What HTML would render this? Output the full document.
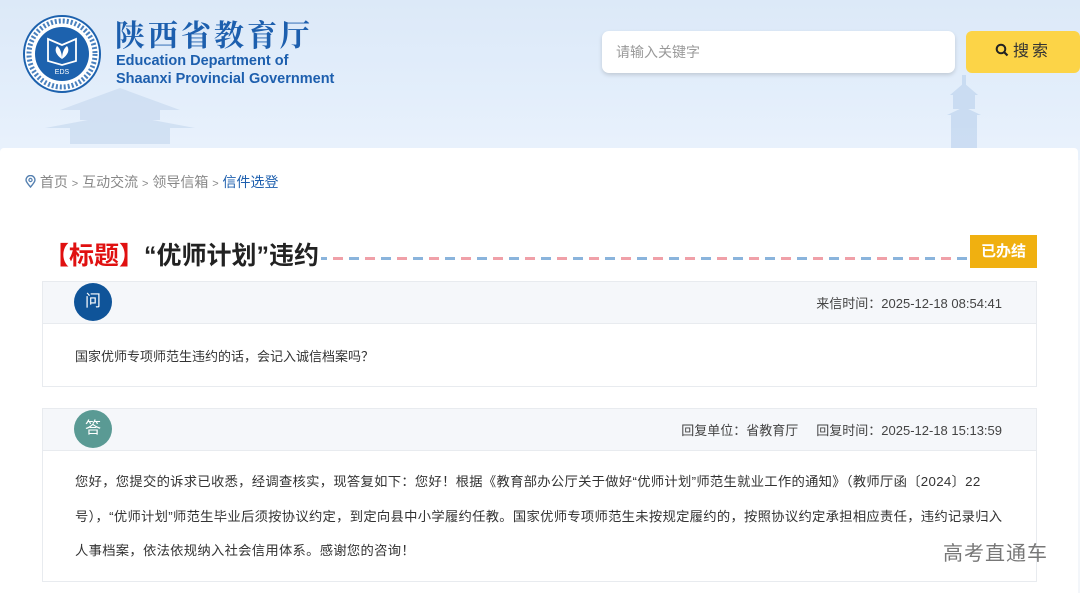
<!DOCTYPE html>
<html><head><meta charset="utf-8"><style>
*{margin:0;padding:0;box-sizing:border-box}
body{width:1080px;height:593px;overflow:hidden;background:#f3f6fa;font-family:"Liberation Sans","Noto Sans CJK SC",sans-serif;position:relative}
.hdr{position:absolute;left:0;top:0;width:1080px;height:160px;background:linear-gradient(180deg,#dce9f8 0%,#e3eefb 60%,#eaf2fc 100%)}
.main{position:absolute;left:0;top:148px;width:1078px;height:445px;background:#fff;border-radius:4px 4px 0 0}
.abs{position:absolute}
.card{position:absolute;left:42px;width:995px;border:1px solid #e8ebef;background:#fff}
.ch{height:42px;background:#f5f7fa;border-bottom:1px solid #e8ebef;position:relative}
.circ{position:absolute;left:31px;top:1px;width:38px;height:38px;border-radius:50%;color:#fff;font-size:16px;text-align:center;line-height:38px}
.meta{position:absolute;right:34px;top:11px;font-size:13px;color:#444}
.txt{font-size:13px;color:#333}
</style></head><body>
<div class="hdr">
  <svg class="abs" style="left:0;top:70px" width="620" height="80"><g fill="#c9dbf0" opacity="0.7"><path d="M60 40 L120 18 L180 40 Z"/><rect x="80" y="40" width="80" height="10"/><path d="M45 58 L120 44 L195 58Z"/><rect x="70" y="58" width="100" height="16"/></g></svg>
  <svg class="abs" style="left:935px;top:75px" width="60" height="75"><g fill="#c4d8f0" opacity="0.8"><rect x="27" y="0" width="4" height="10"/><path d="M15 20 L29 8 L43 20Z"/><rect x="18" y="20" width="22" height="14"/><path d="M12 40 L29 32 L46 40Z"/><rect x="16" y="40" width="26" height="35"/></g></svg>
  <svg class="abs" style="left:23px;top:15px" width="78" height="78" viewBox="0 0 78 78">
    <circle cx="39" cy="39" r="38" fill="#fff" stroke="#1d62ae" stroke-width="2"/>
    <circle cx="39" cy="39" r="27" fill="#1d62ae"/>
    <circle cx="39" cy="39" r="33" fill="none" stroke="#1d62ae" stroke-width="5" stroke-dasharray="2 2" opacity="0.8"/>
    <path d="M25 24 L39 30 L53 24 L53 46 L39 50 L25 46Z" fill="none" stroke="#fff" stroke-width="1.8"/>
    <path d="M39 44 C33 40 31 35 34 31 C37 33 39 38 39 44 C39 38 41 33 44 31 C47 35 45 40 39 44Z" fill="#fff"/>
    <text x="39" y="59" font-size="7" fill="#fff" text-anchor="middle" font-family="Liberation Sans">EDS</text>
  </svg>
  <div class="abs" style="left:115px;top:14px;font-size:30px;color:#1d5fae;letter-spacing:3px;font-family:'Noto Serif CJK SC',serif;font-weight:700;line-height:38px">陕西省教育厅</div>
  <div class="abs" style="left:116px;top:52px;font-size:14.5px;color:#1d5fae;font-weight:700;line-height:18px">Education Department of<br>Shaanxi Provincial Government</div>
  <div class="abs" style="left:602px;top:31px;width:353px;height:42px;background:#fff;border-radius:7px;box-shadow:0 2px 4px rgba(0,0,0,0.15);font-size:14px;color:#999;padding:11px 14px">请输入关键字</div>
  <div class="abs" style="left:966px;top:31px;width:114px;height:42px;background:#fcd447;border-radius:6px;font-size:16px;color:#333;text-align:center;line-height:42px;letter-spacing:3px">
    <svg width="14" height="14" viewBox="0 0 14 14" style="vertical-align:-1px;margin-right:4px"><circle cx="6" cy="6" r="4.3" fill="none" stroke="#222" stroke-width="2"/><path d="M9 9 L12.5 12.5" stroke="#222" stroke-width="2.2"/></svg>搜索</div>
</div>
<div class="main"></div>
<div class="abs" style="left:25px;top:173px;font-size:14px;color:#888;line-height:18px">
  <svg width="11" height="13" viewBox="0 0 11 13" style="vertical-align:-1px"><path d="M5.5 12 C2 8 1 6.5 1 5 A4.5 4.5 0 0 1 10 5 C10 6.5 9 8 5.5 12Z" fill="none" stroke="#5580b0" stroke-width="1.4"/><circle cx="5.5" cy="5" r="1.6" fill="none" stroke="#5580b0" stroke-width="1.2"/></svg>
  首页 <span style="font-size:11px">&gt;</span> 互动交流 <span style="font-size:11px">&gt;</span> 领导信箱 <span style="font-size:11px">&gt;</span> <span style="color:#1d5fae">信件选登</span></div>
<div class="abs" style="left:45px;top:257px;width:930px;height:3px;background:repeating-linear-gradient(90deg,#f0a0a8 0 10px,transparent 10px 16px,#8ab4dc 16px 26px,transparent 26px 32px)"></div>
<div class="abs" style="left:44px;top:239px;font-size:25px;font-weight:700;line-height:34px;background:#fff;padding-right:2px"><span style="color:#e01010">【标题】</span><span style="color:#222">“优师计划”违约</span></div>
<div class="abs" style="left:970px;top:235px;width:67px;height:33px;background:#f0b010;color:#fff;font-size:15px;font-weight:700;text-align:center;line-height:33px">已办结</div>
<div class="card" style="top:281px;height:106px">
  <div class="ch"><div class="circ" style="background:#0f5499">问</div><div class="meta">来信时间：2025-12-18 08:54:41</div></div>
  <div class="txt" style="padding:22px 32px">国家优师专项师范生违约的话，会记入诚信档案吗？</div>
</div>
<div class="card" style="top:408px;height:174px">
  <div class="ch"><div class="circ" style="background:#5a9a94">答</div><div class="meta">回复单位：省教育厅&nbsp;&nbsp;&nbsp;&nbsp;&nbsp;回复时间：2025-12-18 15:13:59</div></div>
  <div class="txt" style="padding:14px 32px 0;line-height:34.5px;white-space:nowrap;font-size:13.3px;letter-spacing:0.3px">您好，您提交的诉求已收悉，经调查核实，现答复如下：您好！根据《教育部办公厅关于做好“优师计划”师范生就业工作的通知》（教师厅函〔2024〕22<br>号），“优师计划”师范生毕业后须按协议约定，到定向县中小学履约任教。国家优师专项师范生未按规定履约的，按照协议约定承担相应责任，违约记录归入<br>人事档案，依法依规纳入社会信用体系。感谢您的咨询！</div>
</div>
<div class="abs" style="left:943px;top:537px;font-size:20px;color:#777;letter-spacing:1px">高考直通车</div>
</body></html>
